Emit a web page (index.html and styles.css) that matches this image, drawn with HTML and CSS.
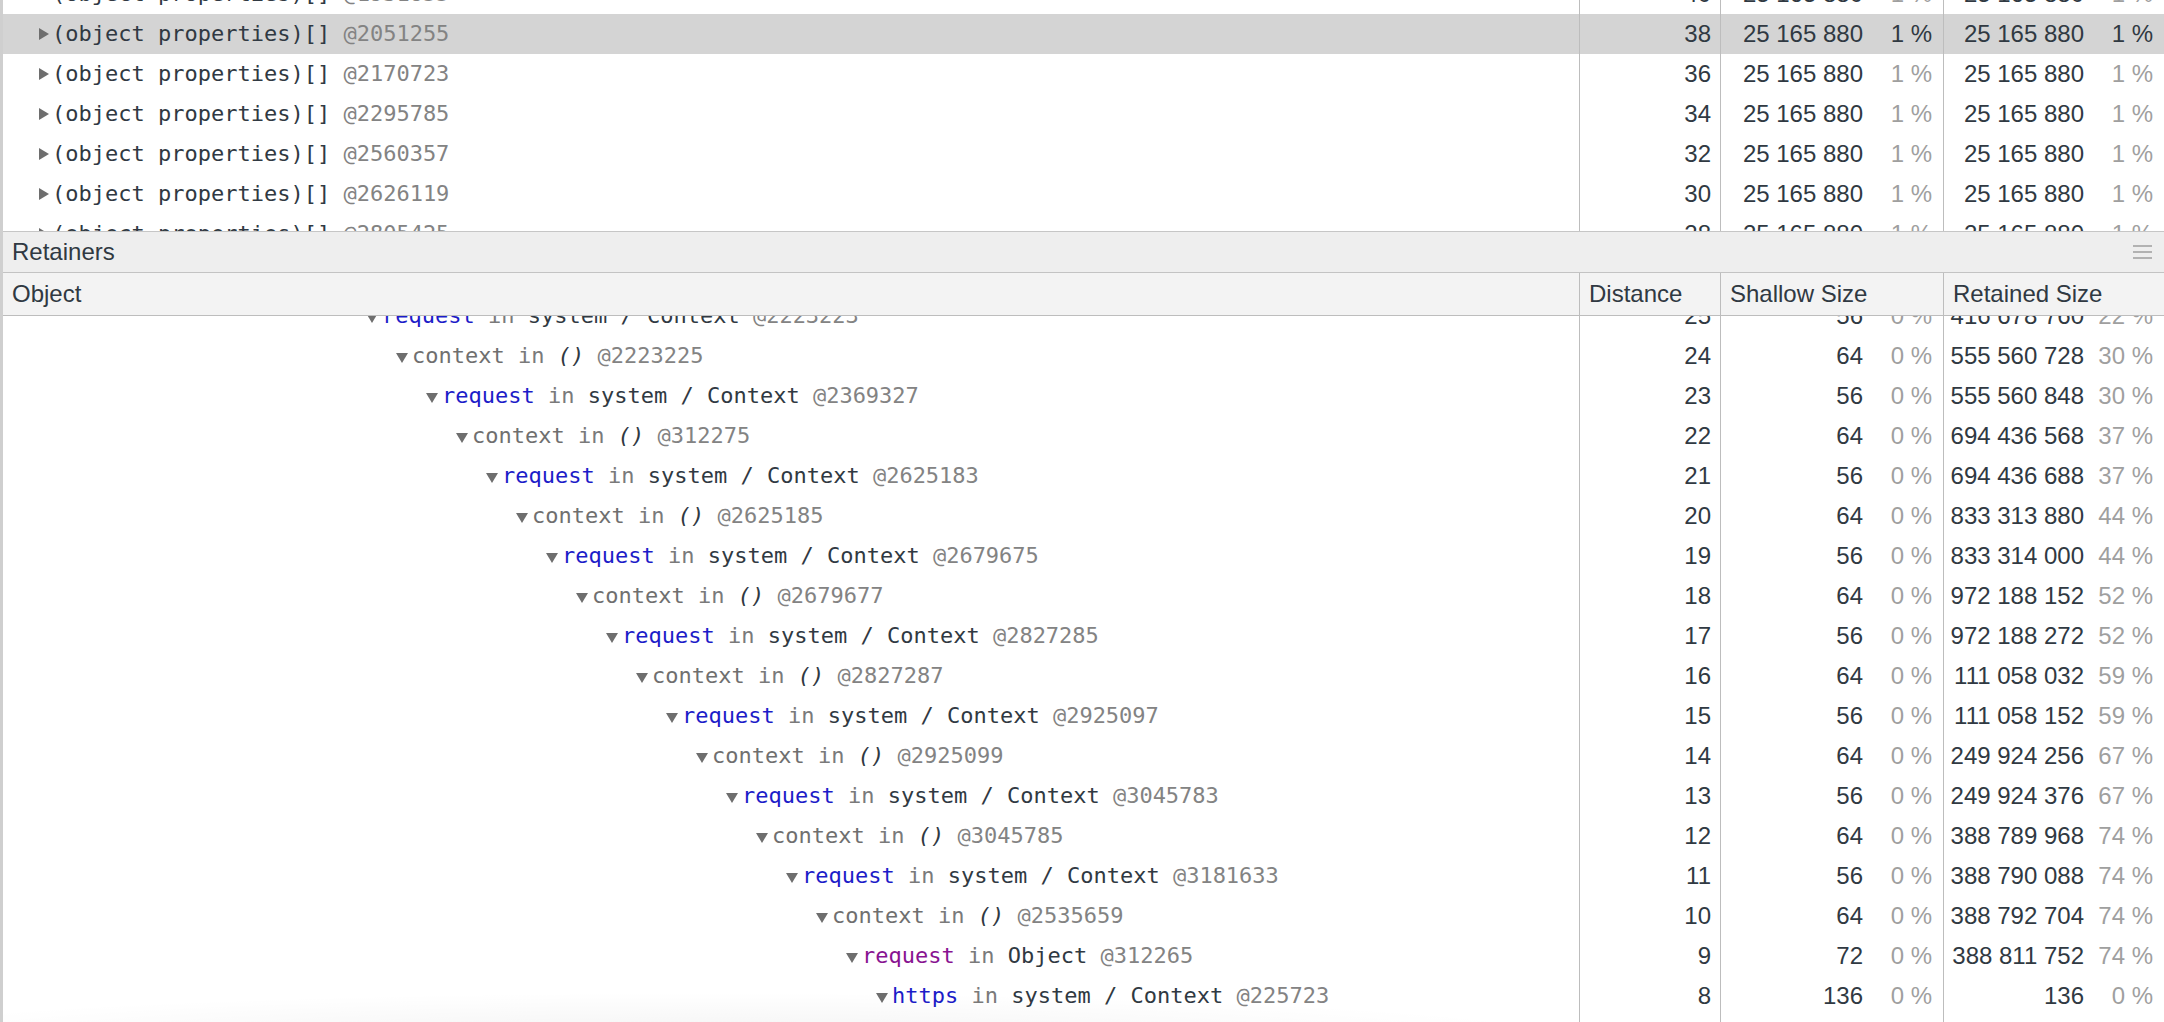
FILE: index.html
```html
<!DOCTYPE html>
<html>
<head>
<meta charset="utf-8">
<link rel="stylesheet" href="styles.css">
</head>
<body>
<div class="app">
  <div class="top-panel">
    <div class="rows top-rows">
      <div class="row">
        <div class="cell obj"><span class="tri-r"></span><span class="t-dark">(object properties)[]</span> <span class="t-id">@1931855</span></div>
        <div class="cell dist">40</div>
        <div class="cell size"><span class="val">25 165 880</span><span class="pct">1 %</span></div>
        <div class="cell size ret"><span class="val">25 165 880</span><span class="pct">1 %</span></div>
      </div>
      <div class="row selected">
        <div class="cell obj"><span class="tri-r"></span><span class="t-dark">(object properties)[]</span> <span class="t-id">@2051255</span></div>
        <div class="cell dist">38</div>
        <div class="cell size"><span class="val">25 165 880</span><span class="pct">1 %</span></div>
        <div class="cell size ret"><span class="val">25 165 880</span><span class="pct">1 %</span></div>
      </div>
      <div class="row">
        <div class="cell obj"><span class="tri-r"></span><span class="t-dark">(object properties)[]</span> <span class="t-id">@2170723</span></div>
        <div class="cell dist">36</div>
        <div class="cell size"><span class="val">25 165 880</span><span class="pct">1 %</span></div>
        <div class="cell size ret"><span class="val">25 165 880</span><span class="pct">1 %</span></div>
      </div>
      <div class="row">
        <div class="cell obj"><span class="tri-r"></span><span class="t-dark">(object properties)[]</span> <span class="t-id">@2295785</span></div>
        <div class="cell dist">34</div>
        <div class="cell size"><span class="val">25 165 880</span><span class="pct">1 %</span></div>
        <div class="cell size ret"><span class="val">25 165 880</span><span class="pct">1 %</span></div>
      </div>
      <div class="row">
        <div class="cell obj"><span class="tri-r"></span><span class="t-dark">(object properties)[]</span> <span class="t-id">@2560357</span></div>
        <div class="cell dist">32</div>
        <div class="cell size"><span class="val">25 165 880</span><span class="pct">1 %</span></div>
        <div class="cell size ret"><span class="val">25 165 880</span><span class="pct">1 %</span></div>
      </div>
      <div class="row">
        <div class="cell obj"><span class="tri-r"></span><span class="t-dark">(object properties)[]</span> <span class="t-id">@2626119</span></div>
        <div class="cell dist">30</div>
        <div class="cell size"><span class="val">25 165 880</span><span class="pct">1 %</span></div>
        <div class="cell size ret"><span class="val">25 165 880</span><span class="pct">1 %</span></div>
      </div>
      <div class="row">
        <div class="cell obj"><span class="tri-r"></span><span class="t-dark">(object properties)[]</span> <span class="t-id">@2805425</span></div>
        <div class="cell dist">28</div>
        <div class="cell size"><span class="val">25 165 880</span><span class="pct">1 %</span></div>
        <div class="cell size ret"><span class="val">25 165 880</span><span class="pct">1 %</span></div>
      </div>
    </div>
  </div>

  <div class="retainers-bar">
    <span class="bar-title">Retainers</span>
    <span class="menu-icon"><i></i><i></i><i></i></span>
  </div>

  <div class="row header">
    <div class="cell obj">Object</div>
    <div class="cell dist">Distance</div>
    <div class="cell size">Shallow Size</div>
    <div class="cell size ret">Retained Size</div>
  </div>

  <div class="bottom-panel">
    <div class="rows bottom-rows">
      <div class="row">
        <div class="cell obj tree" style="--d:0"><span class="tri-d"></span><span class="n-blue">request</span> <span class="t-in">in</span> <span class="t-dark">system / Context</span> <span class="t-id">@2223223</span></div>
        <div class="cell dist">25</div>
        <div class="cell size"><span class="val">56</span><span class="pct">0 %</span></div>
        <div class="cell size ret"><span class="val">416 678 760</span><span class="pct">22 %</span></div>
      </div>
      <div class="row">
        <div class="cell obj tree" style="--d:1"><span class="tri-d"></span><span class="n-ctx">context</span> <span class="t-in">in</span> <span class="t-fn">()</span> <span class="t-id">@2223225</span></div>
        <div class="cell dist">24</div>
        <div class="cell size"><span class="val">64</span><span class="pct">0 %</span></div>
        <div class="cell size ret"><span class="val">555 560 728</span><span class="pct">30 %</span></div>
      </div>
      <div class="row">
        <div class="cell obj tree" style="--d:2"><span class="tri-d"></span><span class="n-blue">request</span> <span class="t-in">in</span> <span class="t-dark">system / Context</span> <span class="t-id">@2369327</span></div>
        <div class="cell dist">23</div>
        <div class="cell size"><span class="val">56</span><span class="pct">0 %</span></div>
        <div class="cell size ret"><span class="val">555 560 848</span><span class="pct">30 %</span></div>
      </div>
      <div class="row">
        <div class="cell obj tree" style="--d:3"><span class="tri-d"></span><span class="n-ctx">context</span> <span class="t-in">in</span> <span class="t-fn">()</span> <span class="t-id">@312275</span></div>
        <div class="cell dist">22</div>
        <div class="cell size"><span class="val">64</span><span class="pct">0 %</span></div>
        <div class="cell size ret"><span class="val">694 436 568</span><span class="pct">37 %</span></div>
      </div>
      <div class="row">
        <div class="cell obj tree" style="--d:4"><span class="tri-d"></span><span class="n-blue">request</span> <span class="t-in">in</span> <span class="t-dark">system / Context</span> <span class="t-id">@2625183</span></div>
        <div class="cell dist">21</div>
        <div class="cell size"><span class="val">56</span><span class="pct">0 %</span></div>
        <div class="cell size ret"><span class="val">694 436 688</span><span class="pct">37 %</span></div>
      </div>
      <div class="row">
        <div class="cell obj tree" style="--d:5"><span class="tri-d"></span><span class="n-ctx">context</span> <span class="t-in">in</span> <span class="t-fn">()</span> <span class="t-id">@2625185</span></div>
        <div class="cell dist">20</div>
        <div class="cell size"><span class="val">64</span><span class="pct">0 %</span></div>
        <div class="cell size ret"><span class="val">833 313 880</span><span class="pct">44 %</span></div>
      </div>
      <div class="row">
        <div class="cell obj tree" style="--d:6"><span class="tri-d"></span><span class="n-blue">request</span> <span class="t-in">in</span> <span class="t-dark">system / Context</span> <span class="t-id">@2679675</span></div>
        <div class="cell dist">19</div>
        <div class="cell size"><span class="val">56</span><span class="pct">0 %</span></div>
        <div class="cell size ret"><span class="val">833 314 000</span><span class="pct">44 %</span></div>
      </div>
      <div class="row">
        <div class="cell obj tree" style="--d:7"><span class="tri-d"></span><span class="n-ctx">context</span> <span class="t-in">in</span> <span class="t-fn">()</span> <span class="t-id">@2679677</span></div>
        <div class="cell dist">18</div>
        <div class="cell size"><span class="val">64</span><span class="pct">0 %</span></div>
        <div class="cell size ret"><span class="val">972 188 152</span><span class="pct">52 %</span></div>
      </div>
      <div class="row">
        <div class="cell obj tree" style="--d:8"><span class="tri-d"></span><span class="n-blue">request</span> <span class="t-in">in</span> <span class="t-dark">system / Context</span> <span class="t-id">@2827285</span></div>
        <div class="cell dist">17</div>
        <div class="cell size"><span class="val">56</span><span class="pct">0 %</span></div>
        <div class="cell size ret"><span class="val">972 188 272</span><span class="pct">52 %</span></div>
      </div>
      <div class="row">
        <div class="cell obj tree" style="--d:9"><span class="tri-d"></span><span class="n-ctx">context</span> <span class="t-in">in</span> <span class="t-fn">()</span> <span class="t-id">@2827287</span></div>
        <div class="cell dist">16</div>
        <div class="cell size"><span class="val">64</span><span class="pct">0 %</span></div>
        <div class="cell size ret"><span class="val">111 058 032</span><span class="pct">59 %</span></div>
      </div>
      <div class="row">
        <div class="cell obj tree" style="--d:10"><span class="tri-d"></span><span class="n-blue">request</span> <span class="t-in">in</span> <span class="t-dark">system / Context</span> <span class="t-id">@2925097</span></div>
        <div class="cell dist">15</div>
        <div class="cell size"><span class="val">56</span><span class="pct">0 %</span></div>
        <div class="cell size ret"><span class="val">111 058 152</span><span class="pct">59 %</span></div>
      </div>
      <div class="row">
        <div class="cell obj tree" style="--d:11"><span class="tri-d"></span><span class="n-ctx">context</span> <span class="t-in">in</span> <span class="t-fn">()</span> <span class="t-id">@2925099</span></div>
        <div class="cell dist">14</div>
        <div class="cell size"><span class="val">64</span><span class="pct">0 %</span></div>
        <div class="cell size ret"><span class="val">249 924 256</span><span class="pct">67 %</span></div>
      </div>
      <div class="row">
        <div class="cell obj tree" style="--d:12"><span class="tri-d"></span><span class="n-blue">request</span> <span class="t-in">in</span> <span class="t-dark">system / Context</span> <span class="t-id">@3045783</span></div>
        <div class="cell dist">13</div>
        <div class="cell size"><span class="val">56</span><span class="pct">0 %</span></div>
        <div class="cell size ret"><span class="val">249 924 376</span><span class="pct">67 %</span></div>
      </div>
      <div class="row">
        <div class="cell obj tree" style="--d:13"><span class="tri-d"></span><span class="n-ctx">context</span> <span class="t-in">in</span> <span class="t-fn">()</span> <span class="t-id">@3045785</span></div>
        <div class="cell dist">12</div>
        <div class="cell size"><span class="val">64</span><span class="pct">0 %</span></div>
        <div class="cell size ret"><span class="val">388 789 968</span><span class="pct">74 %</span></div>
      </div>
      <div class="row">
        <div class="cell obj tree" style="--d:14"><span class="tri-d"></span><span class="n-blue">request</span> <span class="t-in">in</span> <span class="t-dark">system / Context</span> <span class="t-id">@3181633</span></div>
        <div class="cell dist">11</div>
        <div class="cell size"><span class="val">56</span><span class="pct">0 %</span></div>
        <div class="cell size ret"><span class="val">388 790 088</span><span class="pct">74 %</span></div>
      </div>
      <div class="row">
        <div class="cell obj tree" style="--d:15"><span class="tri-d"></span><span class="n-ctx">context</span> <span class="t-in">in</span> <span class="t-fn">()</span> <span class="t-id">@2535659</span></div>
        <div class="cell dist">10</div>
        <div class="cell size"><span class="val">64</span><span class="pct">0 %</span></div>
        <div class="cell size ret"><span class="val">388 792 704</span><span class="pct">74 %</span></div>
      </div>
      <div class="row">
        <div class="cell obj tree" style="--d:16"><span class="tri-d"></span><span class="n-purple">request</span> <span class="t-in">in</span> <span class="t-dark">Object</span> <span class="t-id">@312265</span></div>
        <div class="cell dist">9</div>
        <div class="cell size"><span class="val">72</span><span class="pct">0 %</span></div>
        <div class="cell size ret"><span class="val">388 811 752</span><span class="pct">74 %</span></div>
      </div>
      <div class="row">
        <div class="cell obj tree" style="--d:17"><span class="tri-d"></span><span class="n-blue">https</span> <span class="t-in">in</span> <span class="t-dark">system / Context</span> <span class="t-id">@225723</span></div>
        <div class="cell dist">8</div>
        <div class="cell size"><span class="val">136</span><span class="pct">0 %</span></div>
        <div class="cell size ret"><span class="val">136</span><span class="pct">0 %</span></div>
      </div>
      <div class="row">
        <div class="cell obj"></div>
        <div class="cell dist"></div>
        <div class="cell size"></div>
        <div class="cell size ret"></div>
      </div>
    </div>
    <div class="fade"></div>
  </div>
</div>
</body>
</html>
```

FILE: styles.css
```css
* { box-sizing: border-box; }

html, body {
  margin: 0;
  padding: 0;
  background: #ffffff;
}

.app {
  width: 2164px;
  height: 1022px;
  overflow: hidden;
  border-left: 3px solid #cfcfcf;
  font-family: "Liberation Sans", Arial, sans-serif;
  font-size: 24px;
  color: #303942;
  display: flex;
  flex-direction: column;
}

.top-panel {
  height: 232px;
  flex: none;
  overflow: hidden;
  border-bottom: 1px solid #c6c6c6;
}

.top-rows {
  margin-top: -26px;
}

.row {
  display: flex;
  height: 40px;
  line-height: 40px;
  white-space: nowrap;
}

.row.selected {
  background: #d4d4d4;
}

.cell {
  flex: none;
  height: 100%;
  overflow: hidden;
}

.cell.obj {
  width: 1576px;
  padding-left: 35px;
  font-family: "DejaVu Sans Mono", "Liberation Mono", monospace;
  font-size: 22px;
  white-space: pre;
}

.cell.obj.tree {
  padding-left: calc(363px + var(--d) * 30px);
}

.cell.dist {
  width: 141px;
  border-left: 1px solid #bdbdbd;
  text-align: right;
  padding-right: 9px;
}

.cell.size {
  width: 223px;
  border-left: 1px solid #bdbdbd;
  display: flex;
  justify-content: flex-end;
  padding-right: 11px;
}

.cell.size.ret {
  width: 221px;
}

.pct {
  width: 69px;
  text-align: right;
  color: #9f9f9f;
}

.row.selected .pct {
  color: #303942;
}

.tri-r {
  display: inline-block;
  width: 14px;
  height: 12px;
  vertical-align: middle;
  position: relative;
  top: -1px;
}

.tri-r::before {
  content: "";
  position: absolute;
  left: 1px;
  top: 0;
  border-left: 10px solid #6e6e6e;
  border-top: 6px solid transparent;
  border-bottom: 6px solid transparent;
}

.tri-d {
  display: inline-block;
  width: 16px;
  height: 10px;
  vertical-align: middle;
  position: relative;
  top: 1px;
}

.tri-d::before {
  content: "";
  position: absolute;
  left: 0;
  top: 0;
  border-top: 10px solid #6e6e6e;
  border-left: 6.5px solid transparent;
  border-right: 6.5px solid transparent;
}

.t-dark { color: #303942; }
.t-id { color: #838383; }
.t-in { color: #7a7a7a; }
.t-fn { color: #303942; font-style: italic; }
.n-blue { color: #1c1cc8; }
.n-purple { color: #881391; }
.n-ctx { color: #6f6f6f; }

.retainers-bar {
  flex: none;
  height: 41px;
  background: #eeeeee;
  border-bottom: 1px solid #c3c3c3;
  display: flex;
  align-items: center;
  justify-content: space-between;
  padding-left: 9px;
  padding-right: 12px;
  line-height: 40px;
}

.menu-icon {
  display: flex;
  flex-direction: column;
  gap: 4px;
  width: 19px;
}

.menu-icon i {
  display: block;
  height: 2px;
  background: #b2b2b2;
}

.row.header {
  flex: none;
  height: 43px;
  line-height: 42px;
  background: #f3f3f3;
  border-bottom: 1px solid #bdbdbd;
}

.row.header .cell.obj {
  font-family: "Liberation Sans", Arial, sans-serif;
  font-size: 24px;
  padding-left: 9px;
}

.row.header .cell.dist,
.row.header .cell.size {
  text-align: left;
  justify-content: flex-start;
  padding-left: 9px;
}

.bottom-panel {
  flex: 1;
  overflow: hidden;
  position: relative;
}

.bottom-rows {
  margin-top: -20px;
}

.fade {
  position: absolute;
  left: 0;
  bottom: 0;
  width: 1576px;
  height: 50px;
  background: radial-gradient(ellipse 900px 50px at 700px 70px, rgba(0,0,0,0.05), rgba(0,0,0,0));
  pointer-events: none;
}
```
